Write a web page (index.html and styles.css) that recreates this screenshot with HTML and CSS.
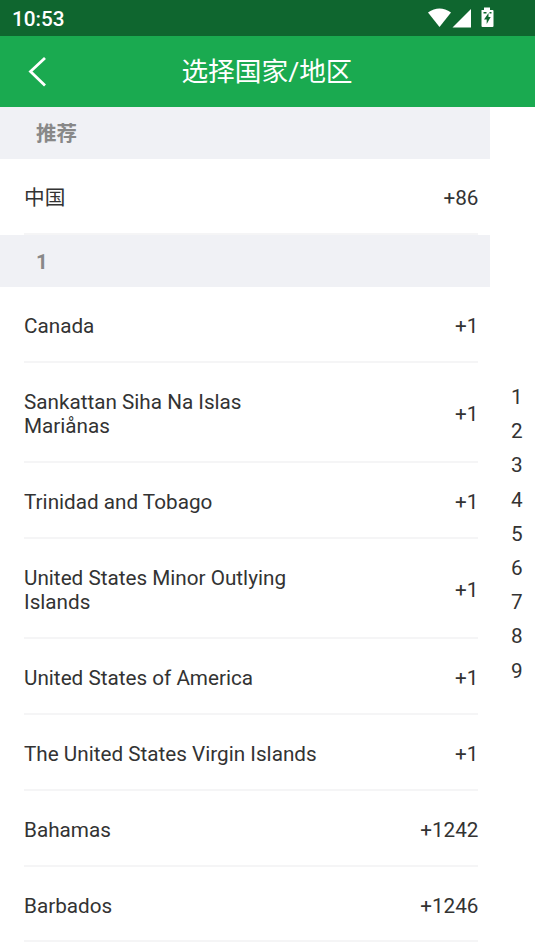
FILE: index.html
```html
<!DOCTYPE html>
<html lang="zh-CN">
<head>
<meta charset="utf-8">
<title>选择国家/地区</title>
<link rel="stylesheet" href="styles.css">
</head>
<body>
<div class="status"><span class="clock">10:53</span>
<svg class="status-icons" width="68" height="24" viewBox="0 0 68 24" fill="#fff"><path d="M0 6.500Q11.500 -1.500 23 6.500L11.500 21Z"/><path d="M43 3V21.500H24.500Z"/><path d="M53.500 4h2.500V1.500h6V4h2.500q1 0 1 1V20q0 1-1 1H54.500q-1 0-1-1V4Z"/><path d="M60.500 7l-4.500 6.500h2.700V18l4-7h-2.200ZM55.500 6h3v1.500h-3ZM61.500 6h2v1.500h-2Z" fill="#0f692f"/></svg></div>
<header class="bar"><svg class="back" width="20" height="32" viewBox="0 0 20 32"><path d="M17 2L2.500 15.500L17 29.500" fill="none" stroke="#fff" stroke-width="2.800"/></svg><h1>选择国家/地区</h1></header>
<div class="body">
<main class="list">
<h2>推荐</h2>
<div class="row"><span class="name">中国</span><span>+86</span></div>
<h2>1</h2>
<div class="row"><span class="name">Canada</span><span>+1</span></div>
<div class="row tall"><span class="name">Sankattan Siha Na Islas Mariånas</span><span>+1</span></div>
<div class="row"><span class="name">Trinidad and Tobago</span><span>+1</span></div>
<div class="row tall"><span class="name">United States Minor Outlying Islands</span><span>+1</span></div>
<div class="row"><span class="name">United States of America</span><span>+1</span></div>
<div class="row"><span class="name">The United States Virgin Islands</span><span>+1</span></div>
<div class="row"><span class="name">Bahamas</span><span>+1242</span></div>
<div class="row"><span class="name">Barbados</span><span>+1246</span></div>
</main>
<nav class="index"><span>1</span><span>2</span><span>3</span><span>4</span><span>5</span><span>6</span><span>7</span><span>8</span><span>9</span></nav>
</div>
</body>
</html>
```
FILE: styles.css
```css
* { box-sizing: border-box; }
body { margin: 0; height: 951px; overflow: hidden; background: #fff; color: #333; font: 20.700px/24.400px Roboto, "Noto Sans CJK SC", sans-serif; }
.status { height: 36px; background: #0f662f; color: #fff; display: flex; justify-content: space-between; align-items: center; padding: 0 40px 0 12px; }
.clock { font-size: 20.700px; font-weight: 500; padding-top: 2px; }
.status-icons { margin-right: -1px; }
.bar { height: 71px; background: #1aaa50; color: #fff; display: grid; grid-template-columns: 60px 1fr 60px; align-items: center; }
.back { margin-left: 28px; }
h1 { margin: 0 1px 0 0; font-size: 26.700px; line-height: 36px; font-weight: 400; text-align: center; }
.body { display: flex; height: 844px; }
.list { width: 490.400px; }
h2 { margin: 0; height: 52px; padding: 1px 0 0 36px; background: #f0f1f5; color: #888; font-size: 20.500px; line-height: 52px; font-weight: 700; }
.row { height: 75.900px; margin: 0 12px 0 24px; padding-top: 4.800px; border-bottom: 2px solid #f5f5f6; display: flex; align-items: center; justify-content: space-between; }
.tall { height: 100.100px; }
.name { width: 300px; }
.index { flex: 1; padding: 273px 0 0 8px; display: flex; flex-direction: column; align-items: center; line-height: 34.200px; }
```
